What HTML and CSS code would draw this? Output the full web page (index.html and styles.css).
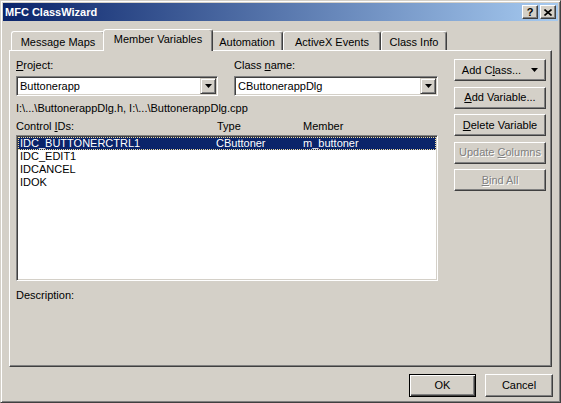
FILE: index.html
```html
<!DOCTYPE html>
<html>
<head>
<meta charset="utf-8">
<title>MFC ClassWizard</title>
<link rel="stylesheet" href="styles.css">
</head>
<body>
<div class="window">
  <div class="titlebar">
    <span class="title">MFC ClassWizard</span>
    <div class="caption-buttons">
      <div class="cap-btn help">?</div>
      <div class="cap-btn close"><svg width="8" height="7" viewBox="0 0 8 7"><path d="M0.5 0.5 L7.5 6.5 M7.5 0.5 L0.5 6.5" stroke="#000" stroke-width="1.6" fill="none"/></svg></div>
    </div>
  </div>
  <div class="client">
    <div class="tabctl">
      <div class="tabs">
        <div class="tab t1">Message Maps</div>
        <div class="tab t2 selected">Member Variables</div>
        <div class="tab t3">Automation</div>
        <div class="tab t4">ActiveX Events</div>
        <div class="tab t5">Class Info</div>
      </div>
      <div class="panel">
        <div class="left">
          <div class="fields">
            <div class="field f-project">
              <div class="label"><u>P</u>roject:</div>
              <div class="combo"><span class="combo-text">Buttonerapp</span><span class="drop"><svg width="7" height="4" viewBox="0 0 7 4"><polygon points="0,0 7,0 3.5,4" fill="#000"/></svg></span></div>
            </div>
            <div class="field f-class">
              <div class="label">Class <u>n</u>ame:</div>
              <div class="combo"><span class="combo-text">CButtonerappDlg</span><span class="drop"><svg width="7" height="4" viewBox="0 0 7 4"><polygon points="0,0 7,0 3.5,4" fill="#000"/></svg></span></div>
            </div>
          </div>
          <div class="path">I:\...\ButtonerappDlg.h, I:\...\ButtonerappDlg.cpp</div>
          <div class="list-head"><span>Control <u>I</u>Ds:</span><span>Type</span><span>Member</span></div>
          <div class="listbox">
            <div class="row sel"><span>IDC_BUTTONERCTRL1</span><span>CButtoner</span><span>m_buttoner</span></div>
            <div class="row"><span>IDC_EDIT1</span><span></span><span></span></div>
            <div class="row"><span>IDCANCEL</span><span></span><span></span></div>
            <div class="row"><span>IDOK</span><span></span><span></span></div>
          </div>
          <div class="desc">Description:</div>
        </div>
        <div class="right">
          <button class="btn add-class"><span>Add C<u>l</u>ass...</span><svg width="7" height="4" viewBox="0 0 7 4"><polygon points="0,0 7,0 3.5,4" fill="#000"/></svg></button>
          <button class="btn"><span><u>A</u>dd Variable...</span></button>
          <button class="btn"><span><u>D</u>elete Variable</span></button>
          <button class="btn disabled"><span>Update <u>C</u>olumns</span></button>
          <button class="btn disabled"><span><u>B</u>ind All</span></button>
        </div>
      </div>
    </div>
    <div class="footer">
      <button class="btn default ok">OK</button>
      <button class="btn cancel">Cancel</button>
    </div>
  </div>
</div>
</body>
</html>
```

FILE: styles.css
```css
html, body {
  margin: 0;
  padding: 0;
  background: #D4D0C8;
}

body {
  font-family: "Liberation Sans", Arial, sans-serif;
  font-size: 11px;
  color: #000;
}

.window {
  width: 561px;
  height: 403px;
  box-sizing: border-box;
  background: #D4D0C8;
  border: 1px solid;
  border-color: #D4D0C8 #404040 #404040 #D4D0C8;
  box-shadow: inset 1px 1px #fff, inset -1px -1px #808080;
  padding: 2px;
  display: flex;
  flex-direction: column;
}

.titlebar {
  height: 18px;
  flex: none;
  display: flex;
  align-items: center;
  justify-content: space-between;
  background: linear-gradient(to right, #0A246A, #A6CAF0);
  padding: 0 2px 0 2px;
}

.title {
  color: #fff;
  font-weight: bold;
  font-size: 11px;
  line-height: 18px;
}

.caption-buttons {
  display: flex;
  gap: 2px;
}

.cap-btn {
  width: 16px;
  height: 14px;
  box-sizing: border-box;
  background: #D4D0C8;
  border: 1px solid;
  border-color: #fff #404040 #404040 #fff;
  box-shadow: inset -1px -1px #808080;
  display: flex;
  align-items: center;
  justify-content: center;
  font-weight: bold;
  font-size: 11px;
  line-height: 10px;
}

.client {
  flex: 1;
  display: flex;
  flex-direction: column;
  padding: 8px 6px 0 6px;
}

.tabctl {
  height: 338px;
  display: flex;
  flex-direction: column;
}

.tabs {
  height: 21px;
  flex: none;
  display: flex;
  align-items: flex-end;
  padding-left: 2px;
}

.tab {
  height: 19px;
  box-sizing: border-box;
  border-top: 1px solid #fff;
  border-left: 1px solid #fff;
  border-right: 1px solid #404040;
  box-shadow: inset -1px 0 #808080;
  border-radius: 3px 3px 0 0;
  background: #D4D0C8;
  display: flex;
  align-items: center;
  justify-content: center;
  padding-top: 1px;
  white-space: nowrap;
}

.t1 { width: 94px; }
.t2 { width: 106px; }
.t3 { width: 72px; }
.t4 { width: 98px; }
.t5 { width: 66px; }

.tab.selected {
  width: 110px;
  height: 22px;
  margin: 0 -2px -1px -2px;
  position: relative;
  z-index: 1;
  padding-top: 0;
  padding-bottom: 3px;
}

.panel {
  flex: 1;
  box-sizing: border-box;
  border: 1px solid;
  border-color: #fff #404040 #404040 #fff;
  box-shadow: inset -1px -1px #808080;
  display: grid;
  grid-template-columns: 422px 92px;
  column-gap: 16px;
  align-items: start;
  padding: 8px 0 0 6px;
}

.left {
  display: flex;
  flex-direction: column;
}

.fields {
  display: flex;
  gap: 16px;
}

.f-project { width: 202px; }
.f-class { width: 204px; }

.label {
  line-height: 13px;
  height: 13px;
}

.combo {
  margin-top: 4px;
  height: 20px;
  box-sizing: border-box;
  background: #fff;
  border: 1px solid;
  border-color: #808080 #fff #fff #808080;
  box-shadow: inset 1px 1px #404040, inset -1px -1px #D4D0C8;
  padding: 1px;
  display: flex;
  align-items: center;
}

.combo-text {
  flex: 1;
  padding-left: 2px;
  line-height: 16px;
}

.drop {
  width: 16px;
  height: 16px;
  box-sizing: border-box;
  background: #D4D0C8;
  border: 1px solid;
  border-color: #D4D0C8 #404040 #404040 #D4D0C8;
  box-shadow: inset 1px 1px #fff, inset -1px -1px #808080;
  display: flex;
  align-items: center;
  justify-content: center;
}

.path {
  margin-top: 6px;
  line-height: 13px;
}

.list-head {
  margin-top: 5px;
  line-height: 13px;
  display: grid;
  grid-template-columns: 201px 86px 1fr;
}

.listbox {
  margin-top: 2px;
  height: 146px;
  box-sizing: border-box;
  background: #fff;
  border: 1px solid;
  border-color: #808080 #fff #fff #808080;
  box-shadow: inset 1px 1px #404040, inset -1px -1px #D4D0C8;
  padding: 1px;
}

.row {
  height: 13px;
  box-sizing: border-box;
  border: 1px solid transparent;
  padding-left: 1px;
  line-height: 11px;
  display: grid;
  grid-template-columns: 196px 87px 1fr;
  white-space: nowrap;
}

.row.sel {
  background: #0A246A;
  color: #fff;
  border: 1px dotted #F0DC9C;
}

.desc {
  margin-top: 8px;
  line-height: 13px;
}

.right {
  display: flex;
  flex-direction: column;
  gap: 5.5px;
}

.btn {
  font-family: "Liberation Sans", Arial, sans-serif;
  font-size: 11px;
  color: #000;
  margin: 0;
  padding: 0;
  height: 22px;
  box-sizing: border-box;
  background: #D4D0C8;
  border: 1px solid;
  border-color: #fff #404040 #404040 #fff;
  box-shadow: inset -1px -1px #808080;
  display: flex;
  align-items: center;
  justify-content: center;
  line-height: 13px;
  white-space: nowrap;
}

.add-class {
  gap: 10px;
}

.btn.disabled {
  color: #808080;
  text-shadow: 1px 1px #fff;
}

.footer {
  display: flex;
  justify-content: flex-end;
  gap: 9px;
  padding-top: 7px;
  margin-right: -1px;
}

.footer .btn {
  height: 23px;
}

.ok { width: 67px; }
.cancel { width: 68px; }

.btn.default {
  border: 1px solid #000;
  box-shadow: inset 1px 1px #fff, inset -1px -1px #404040, inset -2px -2px #808080;
}
```
